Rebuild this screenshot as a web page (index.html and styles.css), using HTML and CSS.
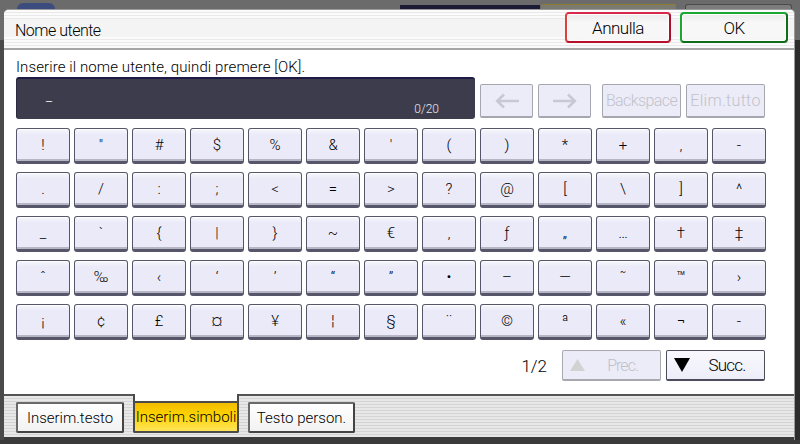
FILE: index.html
```html
<!DOCTYPE html>
<html lang="it">
<head>
<meta charset="utf-8">
<title>Nome utente</title>
<link rel="stylesheet" href="styles.css">
</head>
<body>
<div class="screen">
  <div class="backdrop">
    <div class="bd-circle"></div>
    <div class="bd-navy"></div>
    <div class="bd-olive"></div>
    <div class="bd-grey"></div>
  </div>
  <div class="window">
    <div class="titlebar">
      <div class="title">Nome utente</div>
      <div class="btn-top btn-cancel">Annulla</div>
      <div class="btn-top btn-ok">OK</div>
    </div>
    <div class="content">
      <div class="prompt">Inserire il nome utente, quindi premere [OK].</div>
      <div class="input-row">
        <div class="field">
          <span class="cursor">_</span>
          <span class="counter">0/20</span>
        </div>
        <div class="dbtn arrow">
          <svg width="26" height="16" viewBox="0 0 26 16"><path d="M25 8H3M10 1.5L3.2 8L10 14.5" fill="none" stroke="#c8c8d2" stroke-width="2.6"/></svg>
        </div>
        <div class="dbtn arrow arrow-r">
          <svg width="26" height="16" viewBox="0 0 26 16"><path d="M1 8H23M16 1.5L22.8 8L16 14.5" fill="none" stroke="#c8c8d2" stroke-width="2.6"/></svg>
        </div>
        <div class="dbtn bs">Backspace</div>
        <div class="dbtn clr">Elim.tutto</div>
      </div>
      <div class="keys">
        <div class="key">!</div><div class="key">"</div><div class="key">#</div><div class="key">$</div><div class="key">%</div><div class="key">&amp;</div><div class="key">'</div><div class="key">(</div><div class="key">)</div><div class="key">*</div><div class="key">+</div><div class="key">,</div><div class="key">-</div>
        <div class="key">.</div><div class="key">/</div><div class="key">:</div><div class="key">;</div><div class="key">&lt;</div><div class="key">=</div><div class="key">&gt;</div><div class="key">?</div><div class="key">@</div><div class="key">[</div><div class="key">\</div><div class="key">]</div><div class="key">^</div>
        <div class="key">_</div><div class="key">`</div><div class="key">{</div><div class="key">|</div><div class="key">}</div><div class="key">~</div><div class="key">€</div><div class="key">‚</div><div class="key">ƒ</div><div class="key">„</div><div class="key">…</div><div class="key">†</div><div class="key">‡</div>
        <div class="key">ˆ</div><div class="key">‰</div><div class="key">‹</div><div class="key">‘</div><div class="key">’</div><div class="key">“</div><div class="key">”</div><div class="key">•</div><div class="key">–</div><div class="key">—</div><div class="key">˜</div><div class="key">™</div><div class="key">›</div>
        <div class="key">¡</div><div class="key">¢</div><div class="key">£</div><div class="key">¤</div><div class="key">¥</div><div class="key">¦</div><div class="key">§</div><div class="key">¨</div><div class="key">©</div><div class="key">ª</div><div class="key">«</div><div class="key">¬</div><div class="key">-</div>
      </div>
      <div class="pager">
        <span class="page-no">1/2</span>
        <div class="pbtn prev">
          <svg width="15" height="13" viewBox="0 0 15 13"><polygon points="7.5,0 15,12 0,12" fill="#d2d2d2"/></svg>
          <span>Prec.</span>
        </div>
        <div class="pbtn next">
          <svg width="16" height="14" viewBox="0 0 16 14"><polygon points="0,0 16,0 8,14" fill="#000"/></svg>
          <span>Succ.</span>
        </div>
      </div>
    </div>
    <div class="tabbar">
      <div class="tab">Inserim.testo</div>
      <div class="tab active"><div class="face">Inserim.simboli</div></div>
      <div class="tab person">Testo person.</div>
    </div>
  </div>
</div>
</body>
</html>
```
FILE: styles.css
```css
* { box-sizing: border-box; }

body {
  margin: 0;
  width: 800px;
  height: 444px;
  overflow: hidden;
  font-family: Roboto, "Liberation Sans", Arial, sans-serif;
  font-weight: 300;
  color: #000;
}

.screen {
  width: 800px;
  height: 444px;
  background:
    linear-gradient(#3a3a3a, #3a3a3a) 0 440px / 100% 4px no-repeat,
    linear-gradient(to right, #4a4a4a 0 4px, transparent 4px 795px, #2c2c2c 795px) 0 40px / 100% 100% no-repeat,
    #6b6b6b;
}

.backdrop {
  height: 9px;
  display: flex;
  align-items: flex-end;
}
.bd-circle {
  margin-left: 17px;
  width: 38px;
  height: 6px;
  background: #3d4c7e;
  border-radius: 19px 19px 0 0;
}
.bd-navy {
  margin-left: 345px;
  width: 140px;
  height: 4px;
  background: #1b1b36;
}
.bd-olive {
  margin-left: 1px;
  width: 135px;
  height: 5px;
  border: 1px solid #8e7d2e;
  border-bottom: 0;
  background: #7a7a70;
  border-radius: 2px 2px 0 0;
}
.bd-grey {
  margin-left: 9px;
  width: 107px;
  height: 5px;
  border: 1px solid #4a4a4a;
  border-bottom: 0;
  background: #7c7c7c;
  border-radius: 3px 3px 0 0;
}

.window {
  margin-left: 4px;
  width: 791px;
  height: 431px;
  display: flex;
  flex-direction: column;
  background: #fff;
  border-radius: 5px 5px 0 0;
  border-top: 1px solid #9a9a9a;
  border-right: 1px solid #9a9a9a;
  overflow: hidden;
}

.titlebar {
  height: 40px;
  flex: none;
  border-bottom: 2px solid #a6a6a6;
  padding: 2px 6px 0 11px;
  display: flex;
  align-items: flex-start;
  gap: 9px;
  background:
    linear-gradient(to bottom, transparent 9px, #f4f4f4 9px 27px, transparent 27px),
    repeating-linear-gradient(#fbfbfb 0 2px, #e9e9e9 2px 3px);
}
.title {
  flex: 1;
  align-self: center;
  font-size: 16px;
  letter-spacing: -0.5px;
}
.btn-top {
  height: 31px;
  font-size: 17px;
  letter-spacing: -0.5px;
  display: flex;
  align-items: center;
  justify-content: center;
  border: 2px solid;
  border-radius: 4px;
  background: linear-gradient(#ececec, #f8f8f8 35%, #f6f6f6);
  box-shadow: inset 0 0 0 1px #fff;
}
.btn-cancel {
  width: 106px;
  border-color: #d8284c #a8102c #b8102c #e0403c;
}
.btn-ok {
  width: 108px;
  border-color: #1aa830 #0e6c1a #0e6c1a #1aa830;
}

.content {
  flex: 1;
  display: flex;
  flex-direction: column;
  padding-left: 12px;
}
.prompt {
  margin-top: 8px;
  font-size: 15px;
  line-height: 18px;
  letter-spacing: 0.1px;
}

.input-row {
  margin-top: 1px;
  height: 42px;
  display: flex;
  align-items: flex-end;
}
.field {
  width: 459px;
  height: 42px;
  margin-right: 5px;
  background: #3c3c4c;
  border-top: 2px solid #1c1c46;
  border-left: 1px solid #2a2a40;
  border-radius: 3px;
  display: flex;
  justify-content: space-between;
  padding: 0 36px 0 29px;
  color: #fff;
}
.cursor {
  align-self: center;
  font-size: 14px;
  line-height: 14px;
  margin-bottom: 6px;
}
.counter {
  align-self: flex-end;
  font-size: 12px;
  line-height: 14px;
  margin-bottom: 3px;
  color: #e8e8ee;
}

.dbtn {
  height: 34px;
  margin-bottom: 1px;
  border: 1px solid #a6a6b0;
  border-bottom-width: 2px;
  border-radius: 2px;
  background: #ececf8;
  color: #c2c2ca;
  display: flex;
  align-items: center;
  justify-content: center;
  font-size: 16px;
}
.arrow { width: 53px; }
.arrow-r { margin-left: 5px; }
.bs { width: 79px; margin-left: 11px; letter-spacing: -0.6px; }
.clr { width: 79px; margin-left: 5px; letter-spacing: 0.3px; }

.keys {
  margin-top: 9px;
  display: grid;
  grid-template-columns: repeat(13, 54px);
  grid-auto-rows: 36px;
  column-gap: 4px;
  row-gap: 8px;
}
.key {
  border: 1px solid #56566a;
  border-bottom: 3px solid #56566a;
  border-radius: 3px;
  background: linear-gradient(#f6f6fd, #eaeaf8 20%, #eaeaf8);
  box-shadow: inset 0 1px 0 #fff, inset 0 -2px 0 #b6b6c4;
  display: flex;
  align-items: center;
  justify-content: center;
  font-size: 15px;
}

.pager {
  margin-top: 10px;
  margin-right: 29px;
  height: 31px;
  display: flex;
  justify-content: flex-end;
  align-items: center;
}
.page-no {
  font-size: 17px;
  margin-right: 15px;
}
.pbtn {
  width: 99px;
  height: 31px;
  display: flex;
  align-items: center;
  padding-left: 7px;
  border: 1px solid;
  border-bottom-width: 2px;
  border-radius: 2px;
}
.pbtn span { flex: 1; text-align: center; }
.prev {
  border-color: #a8a8b0;
  background: #ececf8;
  color: #c0c0c8;
  font-size: 16px;
  letter-spacing: -1px;
}
.next {
  margin-left: 5px;
  border-color: #4c4c5c;
  background: linear-gradient(#f8f8fd, #eeeefa);
  font-size: 17px;
  letter-spacing: -0.8px;
}

.tabbar {
  height: 46px;
  flex: none;
  border-top: 2px solid #555;
  border-bottom: 3px solid #3c3c3c;
  background: repeating-linear-gradient(#e8e8e8 0 2px, #d4d4d4 2px 3px);
  padding: 6px 0 0 12px;
  display: flex;
  align-items: flex-start;
  gap: 9px;
}
.tab {
  width: 108px;
  height: 31px;
  border: 2px solid;
  border-color: #6a6a6a #444 #444 #6a6a6a;
  border-radius: 2px;
  background: linear-gradient(#fff, #f2f2f2);
  font-size: 15px;
  display: flex;
  align-items: center;
  justify-content: center;
}
.tab.person { width: 107px; }
.tab.active {
  width: 106px;
  height: 39px;
  margin-top: -8px;
  border-top: 0;
  border-color: #4a4a4a;
  border-radius: 0 0 2px 2px;
  background: #fff;
  padding-top: 7px;
  flex-direction: column;
  align-items: stretch;
}
.face {
  flex: 1;
  border-top: 2px solid #4a4a4a;
  background: linear-gradient(#f2bc00, #ffd400 45%, #ffe45a);
  display: flex;
  align-items: center;
  justify-content: center;
  white-space: nowrap;
}
```
